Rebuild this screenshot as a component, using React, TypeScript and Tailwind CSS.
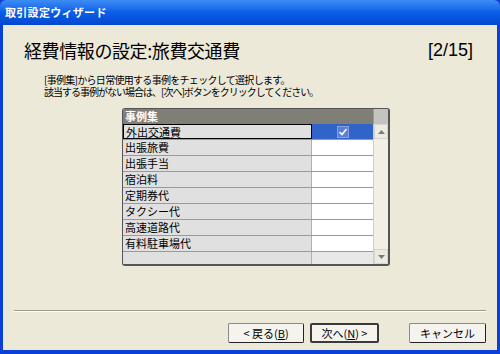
import React from "react";

const rows = ["外出交通費", "出張旅費", "出張手当", "宿泊料", "定期券代", "タクシー代", "高速道路代", "有料駐車場代"];

const jp = { fontFamily: '"Noto Sans CJK JP", "Noto Sans", sans-serif' };

function Check() {
  return (
    <div className="w-[12px] h-[12px] border border-[#8da0d8] bg-[#5a7fd8] flex items-center justify-center">
      <svg width="10" height="10" viewBox="0 0 10 10">
        <path d="M1.5 5 L4 7.5 L8.5 2" stroke="#fff" strokeWidth="1.6" fill="none" />
      </svg>
    </div>
  );
}

function Btn({ children, w, def }: { children: React.ReactNode; w: string; def?: boolean }) {
  return (
    <div
      className={
        "h-[20px] flex items-center justify-center text-[11px] text-black bg-[#f4f3ee] rounded-[2px] " +
        w +
        (def ? " border-2 border-[#3a3a3a]" : " border border-[#8a8a8a] border-b-[#222] border-r-[#222]")
      }
      style={jp}
    >
      {children}
    </div>
  );
}

export default function App() {
  return (
    <div className="w-[500px] h-[354px] flex flex-col bg-[#0a3fd8] overflow-hidden" style={jp}>
      <div className="h-[25px] shrink-0 flex items-center pl-[5px] rounded-t-[6px] bg-gradient-to-b from-[#3d8cf5] via-[#0a5ee6] to-[#0547d0]">
        <span className="text-white font-bold text-[11px] tracking-[0.3px]">取引設定ウィザード</span>
      </div>
      <div className="flex-1 flex px-[3px] pb-[4px]">
        <div className="flex-1 bg-[#ece9d8] flex flex-col">
          <div className="flex items-center justify-between pl-[21px] pr-[24px] pt-[12px] h-[37px]">
            <span className="text-[18px] leading-[20px] text-black tracking-[-0.4px]">経費情報の設定:旅費交通費</span>
            <span className="text-[18px] leading-[20px] text-black" style={{ fontFamily: '"Liberation Sans", sans-serif' }}>[2/15]</span>
          </div>
          <div className="pl-[41px] pt-[12px] text-[10px] leading-[12px] text-black tracking-[-0.7px]">
            <div>[事例集]から日常使用する事例をチェックして選択します。</div>
            <div className="tracking-[-1px]">該当する事例がない場合は、[次へ]ボタンをクリックしてください。</div>
          </div>
          <div className="ml-[119px] mt-[10px] w-[268px] h-[158px] border border-[#555] border-r-2 border-b-2 rounded-[3px] flex flex-col overflow-hidden bg-[#e9e9e9]">
            <div className="h-[15px] flex shrink-0">
              <div className="flex-1 bg-[#7f7f78] text-white font-bold text-[11px] leading-[15px] pl-[2px]">事例集</div>
              <div className="w-[15px] bg-[#c3c3c0] border-l border-[#999]" />
            </div>
            <div className="flex flex-1">
              <div className="flex-1 flex flex-col">
                {rows.map((r, i) => (
                  <div key={r} className="h-[16px] flex shrink-0 border-b border-[#9a9a9a]">
                    <div
                      className={
                        "w-[189px] bg-[#e0e0e0] text-[11px] leading-[14px] pl-[2px] text-black border-r border-[#b0b0b0] " +
                        (i === 0 ? "border border-black" : "")
                      }
                    >
                      {r}
                    </div>
                    <div className={"flex-1 flex items-center justify-center " + (i === 0 ? "bg-[#3164c8]" : "bg-white")}>
                      {i === 0 && <Check />}
                    </div>
                  </div>
                ))}
                <div className="flex-1 flex">
                  <div className="w-[189px] bg-[#e0e0e0] border-r border-[#b0b0b0]" />
                  <div className="flex-1 bg-[#e8e8e8]" />
                </div>
              </div>
              <div className="w-[15px] flex flex-col bg-[#f1efe6] border-l border-[#cfcfc8]">
                <div className="h-[15px] flex items-center justify-center bg-[#ecebe3] border border-[#d8d6cc]">
                  <svg width="7" height="4" viewBox="0 0 7 4"><path d="M0 4 L3.5 0 L7 4Z" fill="#7a7a7a" /></svg>
                </div>
                <div className="flex-1" />
                <div className="h-[15px] flex items-center justify-center bg-[#ecebe3] border border-[#d8d6cc]">
                  <svg width="7" height="4" viewBox="0 0 7 4"><path d="M0 0 L3.5 4 L7 0Z" fill="#7a7a7a" /></svg>
                </div>
              </div>
            </div>
          </div>
          <div className="mx-[11px] mt-[44px] h-[2px] border-t border-[#9d9a8c] border-b border-b-white" />
          <div className="flex items-center justify-end pr-[11px] pt-[11px]">
            <Btn w="w-[76px]">&lt; 戻る(<u>B</u>)</Btn>
            <div className="w-[6px]" />
            <Btn w="w-[69px]" def>次へ(<u>N</u>) &gt;</Btn>
            <div className="w-[30px]" />
            <Btn w="w-[77px]">キャンセル</Btn>
          </div>
        </div>
      </div>
    </div>
  );
}
